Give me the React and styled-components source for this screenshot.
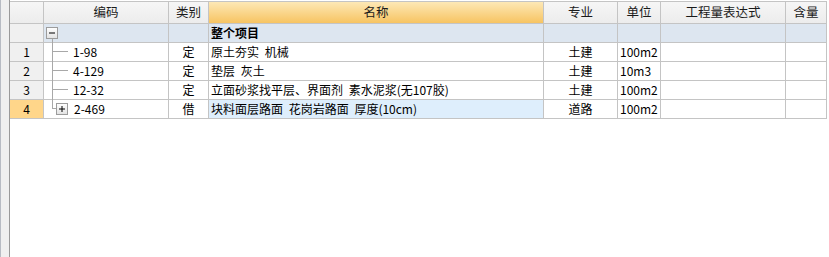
import React from "react";
import styled, { createGlobalStyle } from "styled-components";

const Global = createGlobalStyle`
  html, body { margin: 0; padding: 0; background: #fff; }
  body { font-family: "Noto Sans CJK SC", "Liberation Sans", sans-serif; font-size: 12px; color: #000; }
`;

const COLS = "34px 125px 40px 335px 74px 43px 125px 41px";

const Page = styled.div`
  display: flex;
  width: 829px;
  height: 257px;
  overflow: hidden;
`;

const SideStrip = styled.div`
  width: 8px;
  flex: none;
  background: #f0f0f0;
  border-left: 1px solid #b8bcc4;
  border-right: 1px solid #9a9a9a;
`;

const GridArea = styled.div`
  flex: 1;
  padding-top: 1px;
  background: #fff;
`;

const Grid = styled.div`
  display: grid;
  grid-template-columns: ${COLS};
  border-top: 1px solid #c4c4c4;
  width: max-content;
`;

const Cell = styled.div`
  box-sizing: border-box;
  height: ${(p) => (p.$head ? 22 : 19)}px;
  border-right: 1px solid #c4c4c4;
  border-bottom: 1px solid #c4c4c4;
  display: flex;
  align-items: center;
  justify-content: ${(p) => (p.$align === "left" ? "flex-start" : "center")};
  padding-left: ${(p) => (p.$align === "left" ? 2 : 0)}px;
  white-space: pre;
  word-spacing: 3px;
  overflow: hidden;
  line-height: 1;
  font-weight: ${(p) => (p.$bold ? 700 : 400)};
  background: ${(p) => p.$bg || "#fff"};
`;

const HeadCell = styled(Cell).attrs({ $head: true })`
  background: ${(p) =>
    p.$active ? "linear-gradient(#fde8b6, #f7c462)" : "linear-gradient(#f6f6f6, #ececec)"};
  color: #1a1a1a;
  font-size: 12.5px;
`;

const NumCell = styled(Cell)`
  justify-content: center;
  background: ${(p) => (p.$current ? "#ffd68a" : "#f0f0f0")};
`;

const CodeCell = styled(Cell)`
  justify-content: flex-start;
  padding-left: 0;
  overflow: visible;
`;

const CodeText = styled.span`
  margin-left: ${(p) => p.$gap}px;
`;

const LINE = "#a8a8a8";

function Box({ x, plus }) {
  return (
    <g>
      <defs>
        <linearGradient id="bx" x1="0" y1="0" x2="0" y2="1">
          <stop offset="0" stopColor="#ffffff" />
          <stop offset="1" stopColor="#e2e2e2" />
        </linearGradient>
      </defs>
      <rect x={x + 0.5} y={3.5} width={11} height={11} fill="url(#bx)" stroke="#9c9c9c" />
      <line x1={x + 3} y1={9} x2={x + 9} y2={9} stroke="#000" strokeWidth="1" />
      {plus && <line x1={x + 6} y1={6} x2={x + 6} y2={12} stroke="#000" strokeWidth="1" />}
    </g>
  );
}

function Tree({ kind }) {
  return (
    <svg width="30" height="18" viewBox="0 0 30 18" style={{ flex: "none", overflow: "visible" }}>
      {kind === "root" && (
        <>
          <line x1="8.5" y1="15" x2="8.5" y2="19" stroke={LINE} />
          <Box x={2} />
        </>
      )}
      {kind === "mid" && (
        <>
          <line x1="8.5" y1="-1" x2="8.5" y2="19" stroke={LINE} />
          <line x1="8" y1="8.5" x2="24" y2="8.5" stroke={LINE} />
        </>
      )}
      {kind === "last" && (
        <>
          <line x1="8.5" y1="-1" x2="8.5" y2="9" stroke={LINE} />
          <line x1="8" y1="8.5" x2="12" y2="8.5" stroke={LINE} />
          <Box x={12} plus />
        </>
      )}
    </svg>
  );
}

const headers = ["", "编码", "类别", "名称", "专业", "单位", "工程量表达式", "含量"];

const rows = [
  { n: "1", code: "1-98", type: "定", name: "原土夯实 机械", major: "土建", unit: "100m2", kind: "mid" },
  { n: "2", code: "4-129", type: "定", name: "垫层 灰土", major: "土建", unit: "10m3", kind: "mid" },
  { n: "3", code: "12-32", type: "定", name: "立面砂浆找平层、界面剂 素水泥浆(无107胶)", major: "土建", unit: "100m2", kind: "mid" },
  { n: "4", code: "2-469", type: "借", name: "块料面层路面 花岗岩路面 厚度(10cm)", major: "道路", unit: "100m2", kind: "last", current: true },
];

const ROOT_BG = "#dde6f0";
const SEL_BG = "#deeefc";

export default function App() {
  return (
    <>
      <Global />
      <Page>
        <SideStrip />
        <GridArea>
          <Grid>
            {headers.map((h, i) => (
              <HeadCell key={i} $active={i === 3}>{h}</HeadCell>
            ))}

            <NumCell />
            <CodeCell $bg={ROOT_BG}><Tree kind="root" /></CodeCell>
            <Cell $bg={ROOT_BG} />
            <Cell $bg={ROOT_BG} $align="left" $bold>整个项目</Cell>
            <Cell $bg={ROOT_BG} />
            <Cell $bg={ROOT_BG} />
            <Cell $bg={ROOT_BG} />
            <Cell $bg={ROOT_BG} />

            {rows.map((r) => (
              <React.Fragment key={r.n}>
                <NumCell $current={r.current}>{r.n}</NumCell>
                <CodeCell>
                  <Tree kind={r.kind} />
                  <CodeText $gap={r.kind === "last" ? 0 : -1}>{r.code}</CodeText>
                </CodeCell>
                <Cell>{r.type}</Cell>
                <Cell $align="left" $bg={r.current ? SEL_BG : "#fff"}>{r.name}</Cell>
                <Cell>{r.major}</Cell>
                <Cell $align="left">{r.unit}</Cell>
                <Cell />
                <Cell />
              </React.Fragment>
            ))}
          </Grid>
        </GridArea>
      </Page>
    </>
  );
}
